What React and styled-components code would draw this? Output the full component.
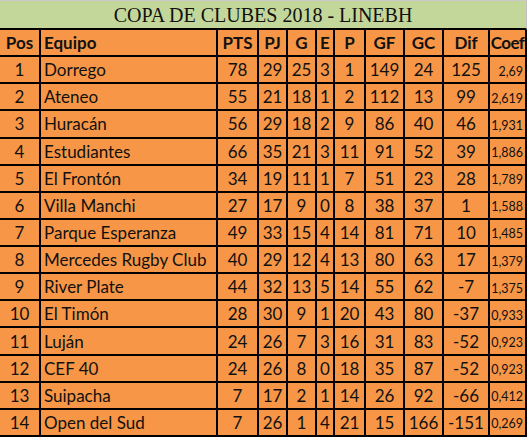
import React from "react";
import styled, { createGlobalStyle } from "styled-components";

const Global = createGlobalStyle`
  html, body { margin: 0; padding: 0; background: #ffffff; }
  body { font-family: Lato, "Liberation Sans", sans-serif; }
`;

const Sheet = styled.div`
  width: 529px;
  height: 437px;
  overflow: hidden;
  background: #ffffff;
`;

const Grid = styled.div`
  display: grid;
  width: 527px;
  height: 437px;
  grid-template-columns: 41px 177px 41px 29px 29px 18px 31px 39px 39px 46px 37px;
  grid-template-rows: 30px repeat(15, 1fr);
  background: #f79646;
`;

const Title = styled.div`
  grid-column: 1 / -1;
  box-sizing: border-box;
  background: #c4d79b;
  border-top: 1px solid #c8c8c8;
  border-right: 1px solid #c0c0c0;
  border-bottom: 2px solid #000;
  display: flex;
  align-items: center;
  justify-content: center;
  font-family: "Liberation Serif", "Times New Roman", serif;
  font-size: 20px;
  color: #111;
  padding-top: 1px;
`;

const Cell = styled.div`
  box-sizing: border-box;
  border-right: 2px solid #000;
  border-bottom: 2px solid #000;
  background: #f79646;
  display: flex;
  align-items: center;
  justify-content: ${(p) => (p.$align === "left" ? "flex-start" : p.$align === "right" ? "flex-end" : "center")};
  padding: ${(p) => (p.$align === "left" ? "0 0 0 3px" : p.$align === "right" ? "3px 2px 0 0" : "0")};
  font-size: ${(p) => (p.$small ? "12.5px" : "17px")};
  font-weight: ${(p) => (p.$bold ? 700 : 400)};
  letter-spacing: ${(p) => (p.$tight ? "-0.6px" : "0")};
  color: #111;
  white-space: nowrap;
  overflow: hidden;
`;

const headers = ["Pos", "Equipo", "PTS", "PJ", "G", "E", "P", "GF", "GC", "Dif", "Coef"];

const rows = [
  [1, "Dorrego", 78, 29, 25, 3, 1, 149, 24, 125, "2,69"],
  [2, "Ateneo", 55, 21, 18, 1, 2, 112, 13, 99, "2,619"],
  [3, "Huracán", 56, 29, 18, 2, 9, 86, 40, 46, "1,931"],
  [4, "Estudiantes", 66, 35, 21, 3, 11, 91, 52, 39, "1,886"],
  [5, "El Frontón", 34, 19, 11, 1, 7, 51, 23, 28, "1,789"],
  [6, "Villa Manchi", 27, 17, 9, 0, 8, 38, 37, 1, "1,588"],
  [7, "Parque Esperanza", 49, 33, 15, 4, 14, 81, 71, 10, "1,485"],
  [8, "Mercedes Rugby Club", 40, 29, 12, 4, 13, 80, 63, 17, "1,379"],
  [9, "River Plate", 44, 32, 13, 5, 14, 55, 62, -7, "1,375"],
  [10, "El Timón", 28, 30, 9, 1, 20, 43, 80, -37, "0,933"],
  [11, "Luján", 24, 26, 7, 3, 16, 31, 83, -52, "0,923"],
  [12, "CEF 40", 24, 26, 8, 0, 18, 35, 87, -52, "0,923"],
  [13, "Suipacha", 7, 17, 2, 1, 14, 26, 92, -66, "0,412"],
  [14, "Open del Sud", 7, 26, 1, 4, 21, 15, 166, -151, "0,269"],
];

export default function App() {
  return (
    <Sheet>
      <Global />
      <Grid>
        <Title>COPA DE CLUBES 2018 - LINEBH</Title>
        {headers.map((h, i) => (
          <Cell key={h} $bold $tight={i === 10} $align={i === 1 ? "left" : "center"}>
            {h}
          </Cell>
        ))}
        {rows.map((r) =>
          r.map((v, i) => (
            <Cell
              key={`${r[0]}-${i}`}
              $align={i === 1 ? "left" : i === 10 ? "right" : "center"}
              $small={i === 10}
            >
              {v}
            </Cell>
          ))
        )}
      </Grid>
    </Sheet>
  );
}
